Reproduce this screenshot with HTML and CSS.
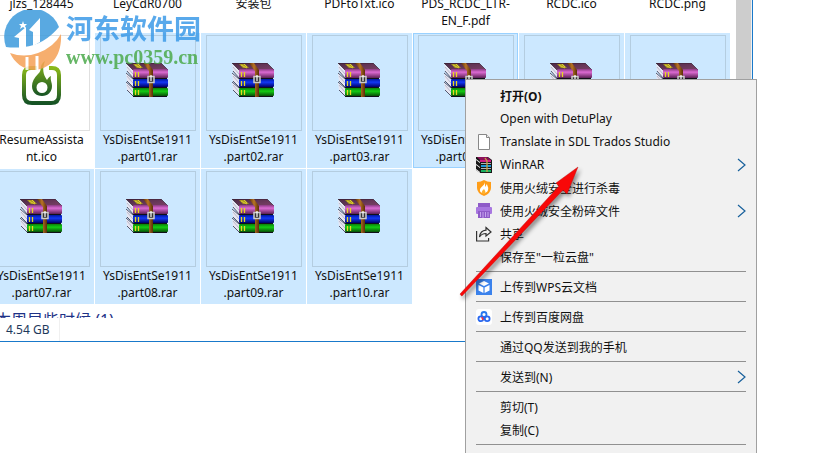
FILE: index.html
```
<!DOCTYPE html>
<html lang="zh-CN">
<head>
    <meta charset="utf-8">
    <title>文件资源管理器</title>
    <link rel="stylesheet" href="styles.css">
</head>
<body>
    <!-- Shared icons -->
    <svg class="sprite" aria-hidden="true">
        <defs>
            <linearGradient id="purple" x1="0" y1="0" x2="0" y2="1">
                <stop offset="0" stop-color="#8a3a82"/><stop offset=".35" stop-color="#dc6ad2"/><stop offset="1" stop-color="#5c2054"/>
            </linearGradient>
            <linearGradient id="blue" x1="0" y1="0" x2="0" y2="1">
                <stop offset="0" stop-color="#0018a0"/><stop offset=".4" stop-color="#1238f4"/><stop offset="1" stop-color="#000068"/>
            </linearGradient>
            <linearGradient id="green" x1="0" y1="0" x2="0" y2="1">
                <stop offset="0" stop-color="#0a800a"/><stop offset=".4" stop-color="#14cc14"/><stop offset="1" stop-color="#085008"/>
            </linearGradient>
            <linearGradient id="cover" x1="0" y1="0" x2="1" y2="1">
                <stop offset="0" stop-color="#4c2a44"/><stop offset="1" stop-color="#7c4068"/>
            </linearGradient>
            <linearGradient id="leather" x1="0" y1="0" x2="1" y2="0">
                <stop offset="0" stop-color="#5a2e08"/><stop offset=".5" stop-color="#b87426"/><stop offset="1" stop-color="#5a2e08"/>
            </linearGradient>
        </defs>
        <symbol id="rar" viewBox="0 0 42 34">
            <path d="M0 1L7 7V15L1 8ZM0 10L7 16V24L1 18ZM0 19L7 25V33L1 27Z" fill="#e6e6f2"/>
            <path d="M1 8l6 7M1 18l6 6M1 27l6 6M0 10l7 6M0 19l7 6" stroke="#34344a" stroke-width=".8"/>
            <path d="M1 4l6 7M1 13l6 7M1 22l6 7" stroke="#a8a8bc" stroke-width=".7"/>
            <path d="M0 0H35L42 7H7Z" fill="url(#cover)" stroke="#24101f" stroke-width=".6"/>
            <path d="M7 1h6l4 4h-6z" fill="#a8961e"/>
            <path d="M9 2l6 3M12 1l3 3" stroke="#e8d838" stroke-width=".8"/>
            <rect x="7" y="6" width="35" height="9" rx="1" fill="url(#purple)"/>
            <rect x="7" y="16" width="35" height="8" rx="1" fill="url(#blue)"/>
            <rect x="7" y="25" width="35" height="8" rx="1" fill="url(#green)"/>
            <path d="M7 15.500h34M7 24.500h34M7 33.500h34" stroke="#101018"/>
            <path d="M9.500 9v5M12.500 9v5M9.500 18v5M12.500 18v5M9.500 27v5M12.500 27v5" stroke="#e8d820" stroke-width="1.300"/>
            <path d="M17 0h5l5 7v27h-4V8z" fill="url(#leather)"/>
            <rect x="22" y="13.500" width="6" height="6" fill="#333" stroke="#ccc" stroke-width="1.500"/>
            <path d="M25 12v6" stroke="#fff" stroke-width="1.200"/>
        </symbol>
        <symbol id="chevron" viewBox="0 0 9 14">
            <path d="M1 1l7 6-7 6" fill="none" stroke="#17609c" stroke-width="1.200"/>
        </symbol>
    </svg>

    <main class="explorer">
        <div class="content">
            <div class="pane">
                <ul class="files">
                    <li class="file"><div class="thumb"></div><span>jlzs_128445</span></li>
                    <li class="file"><div class="thumb"></div><span>LeyCdR0700</span></li>
                    <li class="file"><div class="thumb"></div><span>安装包</span></li>
                    <li class="file"><div class="thumb"></div><span>PDFtoTxt.ico</span></li>
                    <li class="file"><div class="thumb"></div><span>PDS_RCDC_LTR-<br>EN_F.pdf</span></li>
                    <li class="file"><div class="thumb"></div><span>RCDC.ico</span></li>
                    <li class="file"><div class="thumb"></div><span>RCDC.png</span></li>

                    <li class="file">
                        <div class="thumb">
                            <svg class="resume" viewBox="0 0 40 44">
                                <defs><linearGradient id="leaf" x1="0" y1="0" x2="0" y2="1"><stop offset="0" stop-color="#8ab81a"/><stop offset="1" stop-color="#165325"/></linearGradient></defs>
                                <path d="M15 7H9Q2 7 2 14v20q0 8 8 8h19q8 0 8-8V14q0-7-7-7h-3" fill="none" stroke="url(#leaf)" stroke-width="4"/>
                                <path fill-rule="evenodd" fill="url(#leaf)" d="M23 0c-7 5-2 9-7 13-4 4-6 8-6 12 0 6 4 10 10 10s10-4 10-10c0-4-2-6-1-10-2 1-3 2-4 4-4-6-5-11-2-19zM20 21a5 5 0 1 1 0 11 5 5 0 1 1 0-11z"/>
                            </svg>
                        </div>
                        <span>ResumeAssista<br>nt.ico</span>
                    </li>
                    <li class="file selected"><div class="thumb"><svg class="rar"><use href="#rar"/></svg></div><span>YsDisEntSe1911<br>.part01.rar</span></li>
                    <li class="file selected"><div class="thumb"><svg class="rar"><use href="#rar"/></svg></div><span>YsDisEntSe1911<br>.part02.rar</span></li>
                    <li class="file selected"><div class="thumb"><svg class="rar"><use href="#rar"/></svg></div><span>YsDisEntSe1911<br>.part03.rar</span></li>
                    <li class="file selected focused"><div class="thumb"><svg class="rar"><use href="#rar"/></svg></div><span>YsDisEntSe1911<br>.part04.rar</span></li>
                    <li class="file selected"><div class="thumb"><svg class="rar"><use href="#rar"/></svg></div><span>YsDisEntSe1911<br>.part05.rar</span></li>
                    <li class="file selected"><div class="thumb"><svg class="rar"><use href="#rar"/></svg></div><span>YsDisEntSe1911<br>.part06.rar</span></li>

                    <li class="file selected"><div class="thumb"><svg class="rar"><use href="#rar"/></svg></div><span>YsDisEntSe1911<br>.part07.rar</span></li>
                    <li class="file selected"><div class="thumb"><svg class="rar"><use href="#rar"/></svg></div><span>YsDisEntSe1911<br>.part08.rar</span></li>
                    <li class="file selected"><div class="thumb"><svg class="rar"><use href="#rar"/></svg></div><span>YsDisEntSe1911<br>.part09.rar</span></li>
                    <li class="file selected"><div class="thumb"><svg class="rar"><use href="#rar"/></svg></div><span>YsDisEntSe1911<br>.part10.rar</span></li>
                </ul>
                <h2 class="group">本周早些时候 (1)</h2>
            </div>
            <div class="scrollbar"></div>
        </div>
        <footer class="status"><span>4.54 GB</span></footer>
    </main>

    <!-- Site watermark -->
    <div class="watermark">
        <svg class="mark" viewBox="0 0 58 60">
            <path d="M2 37A27 27 0 0 1 55 17Q40 35 20 37 10 38 2 37z" fill="#3d9bdc"/>
            <path d="M57 24c1 20-8 34-26 36-12 0-21-8-25-17q14 5 28 0Q50 37 57 24z" fill="#f5a055"/>
            <path d="M10 27L22 17V37L15 40V28zM25 20L36 8V32L29 36V22z" fill="#fff"/>
            <path d="M23 47v13M33 46v14" stroke="#fff" stroke-width="3"/>
            <path d="M19 11l1 3 3 0-2 2 1 3-3-2-3 2 1-3-2-2 3 0z" fill="#fff"/>
        </svg>
        <div>
            <div class="site-name">河东软件园</div>
            <div class="site-url">www.pc0359.cn</div>
        </div>
    </div>

    <!-- Context menu -->
    <div class="menu" role="menu">
        <button role="menuitem"><i></i><b>打开(O)</b></button>
        <button role="menuitem"><i></i><span>Open with DetuPlay</span></button>
        <button role="menuitem">
            <svg class="icon" viewBox="0 0 16 16"><path d="M2.500.5h8l3 3v12h-11z" fill="#fff" stroke="#888"/><path d="M10.500.5v3h3" fill="#eee" stroke="#888"/></svg>
            <span>Translate in SDL Trados Studio</span>
        </button>
        <button role="menuitem">
            <svg class="icon" viewBox="0 0 16 16">
                <path d="M0 0h12l4 3v13H4L0 13z" fill="#181818"/>
                <path d="M1 0h10l4 3H4z" fill="#8c1058"/><path d="M4 3h11v2H4z" fill="#d01c84"/><path d="M5 8h10v2H5z" fill="#1c96d8"/><path d="M5 13h10v2H5z" fill="#18b060"/>
                <path d="M0 2l4 3v1L0 3zM0 7l4 3v1L0 8zM0 12l4 3v1L0 13z" fill="#fff"/><path d="M5 6.500h10M5 11.500h10" stroke="#ddd" stroke-width=".8"/><path d="M9 1l2 3v11" fill="none" stroke="#c8a040" stroke-width="1.300"/>
            </svg>
            <span>WinRAR</span><svg class="chevron"><use href="#chevron"/></svg>
        </button>
        <button role="menuitem">
            <svg class="icon" viewBox="0 0 16 16"><path d="M1 2q4 0 7-2 3 2 7 2v6q0 5-7 8-7-3-7-8z" fill="#ff9d18"/><path d="M9 2c0 4-6 5-5 9 1 3 7 3 8-1 1-3-1-4-1-6-1 1-1 2-2 3z" fill="#fff"/><path d="M8 9c-2 2-3 3-1 5 3 0 3-2 1-5z" fill="#ffb02c"/></svg>
            <span>使用火绒安全进行杀毒</span>
        </button>
        <button role="menuitem">
            <svg class="icon" viewBox="0 0 16 16"><path d="M2 0h12v5H2z" fill="#8e5bc8"/><rect y="4" width="16" height="7" rx="1" fill="#a877e0"/><path d="M2 8h12v7H2z" fill="#8e5bc8"/><path d="M4.500 9v5M7 9v6M9.500 9v5M12 9v5" stroke="#c5a4ee"/></svg>
            <span>使用火绒安全粉碎文件</span><svg class="chevron"><use href="#chevron"/></svg>
        </button>
        <button role="menuitem">
            <svg class="icon" viewBox="0 0 16 16" fill="none" stroke="#333" stroke-width="1.200"><path d="M.6 5v10h12v-3M10 1.500l5 4.500-5 4V7.500C7 7.500 5 8.500 3.500 11 4 7 6 4.500 10 4.200z"/></svg>
            <span>共享</span>
        </button>
        <button role="menuitem"><i></i><span>保存至"一粒云盘"</span></button>
        <hr>
        <button role="menuitem">
            <svg class="icon" viewBox="0 0 16 16"><path d="M0 0h16v16H0z" fill="#3b82ec"/><path d="M8 2l5 2.500L8 7 3 4.500zM2.500 6L7.400 8.400V14L2.500 11.500zM13.500 6L8.600 8.400V14l4.900-2.500z" fill="#fff"/></svg>
            <span>上传到WPS云文档</span>
        </button>
        <hr>
        <button role="menuitem">
            <svg class="icon" viewBox="0 0 16 16" fill="none" stroke-width="1.800"><rect width="16" height="16" rx="3" fill="#fff"/><circle cx="8" cy="5.500" r="2.500" stroke="#2878ee"/><circle cx="4.800" cy="9.800" r="2.400" stroke="#2868f0"/><circle cx="11.200" cy="9.800" r="2.400" stroke="#2868f0"/><path d="M6 8l1 3" stroke="#e8384c"/></svg>
            <span>上传到百度网盘</span>
        </button>
        <hr>
        <button role="menuitem"><i></i><span>通过QQ发送到我的手机</span></button>
        <hr>
        <button role="menuitem"><i></i><span>发送到(N)</span><svg class="chevron"><use href="#chevron"/></svg></button>
        <hr>
        <button role="menuitem"><i></i><span>剪切(T)</span></button>
        <button role="menuitem"><i></i><span>复制(C)</span></button>
        <hr>
    </div>

    <!-- Red pointer to the WinRAR entry -->
    <svg class="arrow" viewBox="0 0 130 140">
        <path d="M3 132L102 24 99 21 121 5 110 32 106 28 5 134Q4 134 3 132z" fill="#f80808" stroke="#b01010" stroke-width=".4"/>
    </svg>
</body>
</html>
```

FILE: styles.css
```
* {
    box-sizing: border-box;
}
body {
    position: relative;
    height: 100vh;
    margin: 0;
    overflow: hidden;
    background: #fff;
    color: #111;
    font-family: "Noto Sans", "Noto Sans CJK SC", sans-serif;
    font-size: 12px;
}
.sprite {
    position: absolute;
    width: 0;
    height: 0;
}

/* explorer window */
.explorer {
    margin-right: 86px;
    border-right: 1px solid #1979ca;
    border-bottom: 1px solid #1979ca;
}
.content {
    display: flex;
    height: 318px;
    overflow: hidden;
}
.pane {
    flex: 1;
    min-width: 0;
}
.scrollbar {
    width: 16px;
    border-right: 1px solid #f0f0f0;
    background: #cdcdcd;
}
.files {
    display: grid;
    grid-template-columns: repeat(7, 105px);
    gap: 1px;
    margin: -103px 0 0 -11px;
    padding: 0;
    list-style: none;
}
.file {
    height: 135px;
    padding-top: 2px;
    line-height: 17px;
    text-align: center;
}
.file span {
    display: block;
    white-space: nowrap;
}
.thumb {
    display: flex;
    align-items: center;
    justify-content: center;
    width: 96px;
    height: 96px;
    margin: 0 auto;
    border: 1px solid #e0e0e0;
}
.selected {
    background: #cce8ff;
}
.selected .thumb {
    padding: 0 2px 6px 0;
    border-color: #b4cde0;
}
.focused {
    outline: 1px solid #99d1ff;
    outline-offset: -1px;
}
.rar {
    width: 42px;
    height: 34px;
}
.resume {
    width: 40px;
    height: 44px;
}
.group {
    margin: 4px 0 0 -5px;
    color: #1e3287;
    font-size: 16px;
    font-weight: normal;
    line-height: 24px;
}
.status {
    height: 23px;
    padding-left: 6px;
    color: #1e395b;
    line-height: 23px;
}
.status span {
    display: inline-block;
    padding-right: 10px;
    border-right: 1px solid #f0f0f0;
}

/* watermark */
.watermark {
    position: absolute;
    top: 10px;
    left: 4px;
    display: flex;
    gap: 4px;
    opacity: 0.85;
}
.mark {
    width: 58px;
    height: 60px;
}
.site-name {
    color: #3d9be8;
    font-family: "Noto Sans CJK SC", sans-serif;
    font-size: 27px;
    font-weight: bold;
    line-height: 36px;
}
.site-url {
    color: #4caa4c;
    font-family: "Liberation Serif", serif;
    font-size: 20px;
    font-weight: bold;
    line-height: 22px;
}

/* context menu */
.menu {
    position: absolute;
    top: 79px;
    left: 465px;
    width: 292px;
    padding: 4px 10px 20px;
    border: 1px solid #a0a0a0;
    background: #f1f1f1;
}
.menu button {
    display: flex;
    align-items: center;
    gap: 8px;
    width: 100%;
    height: 23px;
    padding: 0;
    border: 0;
    background: none;
    color: #111;
    font: inherit;
    text-align: left;
}
.menu i,
.icon {
    flex: none;
    width: 16px;
    height: 16px;
}
.chevron {
    width: 9px;
    height: 14px;
    margin-left: auto;
}
.menu hr {
    height: 1px;
    margin: 3px 0;
    border: 0;
    background: #919191;
}

.arrow {
    position: absolute;
    top: 162px;
    left: 457px;
    width: 130px;
    height: 140px;
    pointer-events: none;
    filter: drop-shadow(2px 3px 2px rgba(0, 0, 0, 0.45));
}
```
